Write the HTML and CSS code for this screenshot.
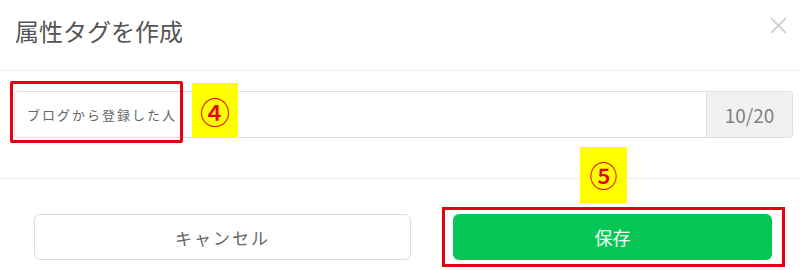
FILE: index.html
```html
<!DOCTYPE html>
<html lang="ja">
<head>
<meta charset="utf-8">
<title>属性タグを作成</title>
<link rel="stylesheet" href="styles.css">
</head>
<body>
<div class="modal">
  <header class="modal-header">
    <h1 class="modal-title">属性タグを作成</h1>
    <button class="close-btn" aria-label="閉じる">
      <svg width="17" height="17" viewBox="0 0 17 17"><path d="M1 1 L16 16 M16 1 L1 16" stroke="#c8c8c8" stroke-width="1.6" fill="none"/></svg>
    </button>
  </header>
  <section class="modal-body">
    <div class="input-group">
      <input class="tag-input" type="text" value="ブログから登録した人">
      <span class="counter">10/20</span>
    </div>
  </section>
  <footer class="modal-footer">
    <button class="btn btn-cancel">キャンセル</button>
    <div class="highlight-wrap">
      <button class="btn btn-save">保存</button>
    </div>
  </footer>
  <div class="mark-box mark-input"></div>
  <div class="badge badge-4">④</div>
  <div class="badge badge-5">⑤</div>
</div>
</body>
</html>
```

FILE: styles.css
```css
* { box-sizing: border-box; }
html, body { margin: 0; padding: 0; background: #fff; }
body { font-family: "Noto Sans CJK JP", "Noto Sans", sans-serif; }

.modal {
  position: relative;
  width: 800px;
  height: 270px;
  overflow: hidden;
  background: #fff;
}

.modal-header {
  height: 71px;
  display: flex;
  align-items: flex-start;
  padding: 13px 13px 0 15px;
  border-bottom: 1px solid #ececec;
}
.modal-title {
  margin: 0;
  font-size: 24px;
  line-height: 36px;
  font-weight: 400;
  color: #555;
}
.close-btn {
  margin-left: auto;
  margin-top: 4px;
  width: 17px;
  height: 17px;
  padding: 0;
  border: 0;
  background: none;
  display: block;
}
.close-btn svg { display: block; }

.modal-body {
  height: 108px;
  padding: 20px 7px 0 14px;
  border-bottom: 1px solid #ececec;
}
.input-group {
  display: flex;
  height: 47px;
  border: 1px solid #dedede;
  border-radius: 4px;
  overflow: hidden;
}
.tag-input {
  flex: 1;
  border: 0;
  outline: none;
  padding: 0 0 0 12px;
  font-family: "Noto Sans CJK JP", sans-serif;
  font-size: 13px;
  letter-spacing: 2px;
  color: #666;
  background: #fff;
}
.counter {
  width: 86px;
  display: flex;
  align-items: center;
  justify-content: center;
  background: #f1f1f1;
  border-left: 1px solid #dedede;
  font-family: "Noto Sans CJK JP", sans-serif;
  font-size: 19px;
  color: #808080;
}

.modal-footer {
  display: flex;
  align-items: flex-start;
  padding: 28px 0 0 34px;
  gap: 31px;
}
.btn {
  height: 46px;
  border-radius: 6px;
  font-family: "Noto Sans CJK JP", sans-serif;
  cursor: pointer;
}
.btn-cancel {
  width: 377px;
  margin-top: 7px;
  border: 1px solid #dcdcdc;
  background: #fff;
  color: #666;
  font-size: 17px;
  letter-spacing: 2px;
}
.highlight-wrap {
  width: 343px;
  padding: 4px 10px 4px 8px;
  border: 3px solid #e60012;
}
.btn-save {
  width: 319px;
  display: block;
  border: 0;
  background: #06c755;
  color: #f4fff8;
  font-size: 18px;
}

.mark-box {
  position: absolute;
  border: 3px solid #e60012;
  border-radius: 2px;
}
.mark-input { left: 10px; top: 81px; width: 173px; height: 62px; }

.badge {
  position: absolute;
  background: #ffff00;
  color: #e60012;
  display: flex;
  align-items: center;
  justify-content: center;
  font-family: "Noto Sans CJK JP", sans-serif;
  font-size: 30px;
  font-weight: 500;
  line-height: 1;
}
.badge-4 { left: 192px; top: 83px; width: 46px; height: 55px; }
.badge-5 { left: 580px; top: 147px; width: 47px; height: 56px; font-size: 28px; }
```
